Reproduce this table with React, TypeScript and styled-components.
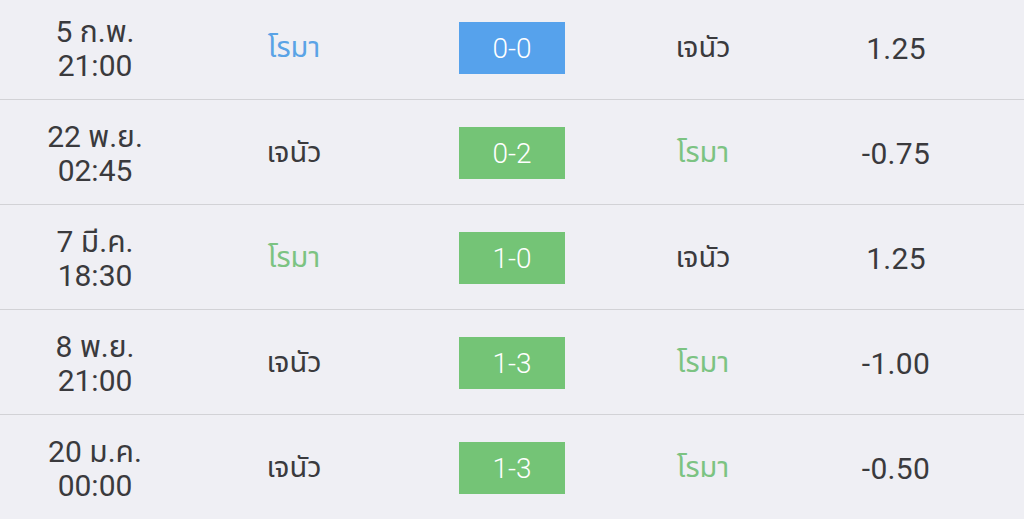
import styled, { createGlobalStyle } from "styled-components";

type Side = "home" | "away";

type Match = {
  date: string;
  time: string;
  home: string;
  away: string;
  score: string;
  odds: string;
  winner?: Side;
  draw?: boolean;
};

const MATCHES: Match[] = [
  { date: "5 ก.พ.", time: "21:00", home: "โรมา", away: "เจนัว", score: "0-0", odds: "1.25", draw: true },
  { date: "22 พ.ย.", time: "02:45", home: "เจนัว", away: "โรมา", score: "0-2", odds: "-0.75", winner: "away" },
  { date: "7 มี.ค.", time: "18:30", home: "โรมา", away: "เจนัว", score: "1-0", odds: "1.25", winner: "home" },
  { date: "8 พ.ย.", time: "21:00", home: "เจนัว", away: "โรมา", score: "1-3", odds: "-1.00", winner: "away" },
  { date: "20 ม.ค.", time: "00:00", home: "เจนัว", away: "โรมา", score: "1-3", odds: "-0.50", winner: "away" },
];

const colors = {
  bg: "#efeff4",
  text: "#3a3a3d",
  line: "#d2d2d6",
  blue: "#56a2ec",
  blueText: "#5aa3e6",
  green: "#74c476",
  greenText: "#7cc382",
};

const GlobalStyle = createGlobalStyle`
  html, body {
    margin: 0;
    padding: 0;
    background: ${colors.bg};
    overflow: hidden;
  }
  body {
    font-family: Roboto, "Noto Sans", "Noto Sans Thai", sans-serif;
    color: ${colors.text};
  }
`;

const Table = styled.div`
  margin-top: -5px;
  display: flex;
  flex-direction: column;
`;

const Row = styled.div`
  display: grid;
  grid-template-columns: 190px 208px 228px 154px 232px;
  align-items: center;
  box-sizing: border-box;
  height: 105px;
  padding-top: 2px;
  border-bottom: 1px solid ${colors.line};
`;

const DateCell = styled.div`
  text-align: center;
  font-size: 30px;
  line-height: 34px;
  padding-top: 2px;
`;

const Team = styled.div<{ $tone?: "blue" | "green" }>`
  text-align: center;
  font-size: 29px;
  color: ${({ $tone }) =>
    $tone === "blue" ? colors.blueText : $tone === "green" ? colors.greenText : colors.text};
`;

const ScoreCell = styled.div`
  display: flex;
  justify-content: center;
`;

const ScoreBox = styled.div<{ $draw?: boolean }>`
  width: 106px;
  height: 52px;
  display: flex;
  align-items: center;
  justify-content: center;
  background: ${({ $draw }) => ($draw ? colors.blue : colors.green)};
  color: #fff;
  font-size: 28px;
  font-weight: 300;
`;

const Odds = styled.div`
  text-align: center;
  font-size: 30px;
  letter-spacing: 0.3px;
`;

const tone = (m: Match, side: Side) => {
  if (m.draw) return side === "home" ? "blue" : undefined;
  return m.winner === side ? "green" : undefined;
};

export default function App() {
  return (
    <>
      <GlobalStyle />
      <Table>
        {MATCHES.map((m, i) => (
          <Row key={i}>
            <DateCell>
              {m.date}
              <br />
              {m.time}
            </DateCell>
            <Team $tone={tone(m, "home")}>{m.home}</Team>
            <ScoreCell>
              <ScoreBox $draw={m.draw}>{m.score}</ScoreBox>
            </ScoreCell>
            <Team $tone={tone(m, "away")}>{m.away}</Team>
            <Odds>{m.odds}</Odds>
          </Row>
        ))}
      </Table>
    </>
  );
}
